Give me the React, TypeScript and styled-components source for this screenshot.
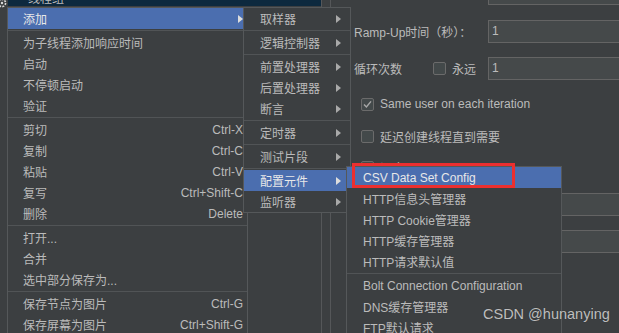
import React from 'react';
import styled, { createGlobalStyle } from 'styled-components';

const GlobalStyle = createGlobalStyle`
  html, body { margin: 0; padding: 0; width: 619px; height: 333px; overflow: hidden; background: #3c3f41; }
  body { font-family: "Liberation Sans", "Noto Sans CJK SC", sans-serif; font-size: 12px; color: #bbbbbb; }
  #root { width: 619px; height: 333px; overflow: hidden; }
`;

const Screen = styled.div`
  position: relative;
  display: flex;
  width: 619px;
  height: 333px;
  overflow: hidden;
  background: #3c3f41;
`;

const TreePanel = styled.div`
  width: 321px;
  flex: none;
  border-right: 1px solid #555759;
  display: flex;
  flex-direction: column;
`;

const TreeTopRow = styled.div`
  display: flex;
  align-items: flex-start;
  height: 11px;
`;

const TreeGutterIcon = styled.div`
  width: 8px;
  height: 11px;
  flex: none;
  display: flex;
  align-items: flex-start;
`;

const TreeSelected = styled.div`
  flex: 1;
  height: 6px;
  background: #0d293e;
  display: flex;
  align-items: flex-end;
  padding-left: 20px;
  overflow: hidden;
  color: #bbbbbb;
  line-height: 14px;
`;

const Splitter = styled.div`
  width: 8px;
  flex: none;
`;

const FormPanel = styled.div`
  flex: 1;
  border-left: 1px solid #555759;
  padding-left: 23px;
  display: flex;
  flex-direction: column;
  overflow: hidden;
`;

const FieldRow = styled.div<{ $top: number; $h?: number; $clip?: boolean }>`
  display: flex;
  align-items: center;
  flex: none;
  height: ${(p) => p.$h ?? 23}px;
  margin-top: ${(p) => p.$top}px;
  overflow: ${(p) => (p.$clip ? 'hidden' : 'visible')};
`;

const ClipWrap = styled.div`
  display: flex;
  align-items: center;
  width: 100%;
  height: 23px;
  flex: none;
  align-self: flex-end;
`;

const Label = styled.span`
  white-space: nowrap;
  color: #bbbbbb;
`;

const TextField = styled.div`
  margin-left: auto;
  width: 131px;
  height: 23px;
  box-sizing: border-box;
  border: 1px solid #646464;
  border-right: none;
  background: #45494a;
  padding-left: 3px;
  line-height: 21px;
  color: #bbbbbb;
  flex: none;
`;

const Check = styled.span<{ $ml?: number }>`
  width: 13px;
  height: 13px;
  box-sizing: border-box;
  border: 1px solid #6b6b6b;
  border-radius: 2px;
  background: #43494a;
  margin-left: ${(p) => p.$ml ?? 0}px;
  margin-right: 6px;
  flex: none;
  display: flex;
  align-items: center;
  justify-content: center;
`;

const CheckRow = styled.div<{ $top: number }>`
  display: flex;
  align-items: center;
  height: 20px;
  margin-top: ${(p) => p.$top}px;
  padding-left: 7px;
  flex: none;
`;

const Menu = styled.div<{ $x: number; $y: number; $w: number }>`
  position: absolute;
  left: ${(p) => p.$x}px;
  top: ${(p) => p.$y}px;
  width: ${(p) => p.$w}px;
  box-sizing: border-box;
  border: 1px solid #55585a;
  background: #3c3f41;
  display: flex;
  flex-direction: column;
`;

const Item = styled.div<{ $active?: boolean; $pl: number; $pr: number }>`
  display: flex;
  align-items: center;
  height: 21px;
  flex: none;
  padding: 0 ${(p) => p.$pr}px 0 ${(p) => p.$pl}px;
  background: ${(p) => (p.$active ? '#4b6eaf' : 'transparent')};
  color: ${(p) => (p.$active ? '#e8e8e8' : '#bbbbbb')};
  white-space: nowrap;
  overflow: hidden;
`;

const ItemText = styled.span`
  flex: 1;
`;

const Shortcut = styled.span`
  color: #bbbbbb;
`;

const Arrow = styled.span<{ $active?: boolean }>`
  width: 0;
  height: 0;
  border-top: 4px solid transparent;
  border-bottom: 4px solid transparent;
  border-left: 5px solid ${(p) => (p.$active ? '#dddddd' : '#a9a9a9')};
`;

const Sep = styled.div`
  height: 1px;
  margin: 1px 0;
  background: #515456;
  flex: none;
`;

const RedBox = styled.div`
  position: absolute;
  left: 352px;
  top: 163px;
  width: 163px;
  height: 25px;
  box-sizing: border-box;
  border: 3px solid #ec2f2f;
`;

const Watermark = styled.div`
  position: absolute;
  left: 483px;
  top: 306px;
  font-family: "Liberation Sans", sans-serif;
  font-size: 14.5px;
  color: rgba(225, 225, 225, 0.82);
  text-shadow: 0 0 1px rgba(0, 0, 0, 0.4);
  white-space: nowrap;
`;

type MI = { t?: string; sc?: string; sub?: boolean; active?: boolean; sep?: boolean };

const mainItems: MI[] = [
  { t: '添加', sub: true, active: true },
  { sep: true },
  { t: '为子线程添加响应时间' },
  { t: '启动' },
  { t: '不停顿启动' },
  { t: '验证' },
  { sep: true },
  { t: '剪切', sc: 'Ctrl-X' },
  { t: '复制', sc: 'Ctrl-C' },
  { t: '粘贴', sc: 'Ctrl-V' },
  { t: '复写', sc: 'Ctrl+Shift-C' },
  { t: '删除', sc: 'Delete' },
  { sep: true },
  { t: '打开...' },
  { t: '合并' },
  { t: '选中部分保存为...' },
  { sep: true },
  { t: '保存节点为图片', sc: 'Ctrl-G' },
  { t: '保存屏幕为图片', sc: 'Ctrl+Shift-G' },
];

const subItems: MI[] = [
  { t: '取样器', sub: true },
  { sep: true },
  { t: '逻辑控制器', sub: true },
  { sep: true },
  { t: '前置处理器', sub: true },
  { t: '后置处理器', sub: true },
  { t: '断言', sub: true },
  { sep: true },
  { t: '定时器', sub: true },
  { sep: true },
  { t: '测试片段', sub: true },
  { sep: true },
  { t: '配置元件', sub: true, active: true },
  { t: '监听器', sub: true },
];

const configItems: MI[] = [
  { t: 'CSV Data Set Config', active: true },
  { t: 'HTTP信息头管理器' },
  { t: 'HTTP Cookie管理器' },
  { t: 'HTTP缓存管理器' },
  { t: 'HTTP请求默认值' },
  { sep: true },
  { t: 'Bolt Connection Configuration' },
  { t: 'DNS缓存管理器' },
  { t: 'FTP默认请求' },
];

const renderItems = (items: MI[], pl: number, pr: number) =>
  items.map((it, i) =>
    it.sep ? (
      <Sep key={i} />
    ) : (
      <Item key={i} $active={it.active} $pl={pl} $pr={pr}>
        <ItemText>{it.t}</ItemText>
        {it.sc && <Shortcut>{it.sc}</Shortcut>}
        {it.sub && <Arrow $active={it.active} />}
      </Item>
    )
  );

const CheckMark = () => (
  <svg width="9" height="9" viewBox="0 0 9 9">
    <path d="M1 4.6 L3.4 7 L8 1.4" fill="none" stroke="#a8a8a8" strokeWidth="1.4" />
  </svg>
);

export default function App() {
  return (
    <>
      <GlobalStyle />
      <Screen>
        <TreePanel>
          <TreeTopRow>
            <TreeGutterIcon>
              <svg width="8" height="11" viewBox="0 0 8 11">
                <circle cx="2" cy="3" r="3.6" fill="none" stroke="#d8d8d8" strokeWidth="1.6" strokeDasharray="2 1.2" />
                <circle cx="2" cy="3" r="1.2" fill="#d8d8d8" />
              </svg>
            </TreeGutterIcon>
            <TreeSelected>线程组</TreeSelected>
          </TreeTopRow>
        </TreePanel>
        <Splitter />
        <FormPanel>
          <FieldRow $top={0} $h={5} $clip>
            <ClipWrap>
              <Label>线程数：</Label>
              <TextField>1</TextField>
            </ClipWrap>
          </FieldRow>
          <FieldRow $top={15}>
            <Label>Ramp-Up时间（秒）：</Label>
            <TextField>1</TextField>
          </FieldRow>
          <FieldRow $top={14}>
            <Label>循环次数</Label>
            <Check $ml={31} />
            <Label>永远</Label>
            <TextField>1</TextField>
          </FieldRow>
          <CheckRow $top={14}>
            <Check>
              <CheckMark />
            </Check>
            <Label>Same user on each iteration</Label>
          </CheckRow>
          <CheckRow $top={12}>
            <Check />
            <Label>延迟创建线程直到需要</Label>
          </CheckRow>
          <CheckRow $top={11}>
            <Check />
            <Label>调度器</Label>
          </CheckRow>
          <FieldRow $top={16}>
            <TextField />
          </FieldRow>
          <FieldRow $top={14}>
            <TextField />
          </FieldRow>
        </FormPanel>

        <Menu $x={7} $y={7} $w={241}>
          {renderItems(mainItems, 15, 4)}
        </Menu>
        <Menu $x={243} $y={7} $w={108}>
          {renderItems(subItems, 16, 9)}
        </Menu>
        <Menu $x={346} $y={166} $w={216}>
          {renderItems(configItems, 16, 8)}
        </Menu>
        <RedBox />
        <Watermark>CSDN @hunanying</Watermark>
      </Screen>
    </>
  );
}
